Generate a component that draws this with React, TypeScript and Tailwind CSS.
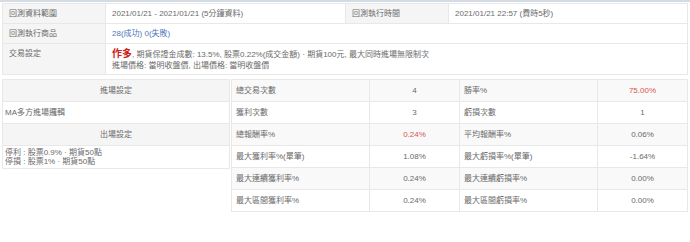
import React from 'react';

const font = { fontFamily: '"Liberation Sans", "Noto Sans CJK TC", sans-serif' };

const stats: [string, string, boolean, string, string, boolean][] = [
  ['總交易次數', '4', false, '勝率%', '75.00%', true],
  ['獲利次數', '3', false, '虧損次數', '1', false],
  ['總報酬率%', '0.24%', true, '平均報酬率%', '0.06%', false],
  ['最大獲利率%(單筆)', '1.08%', false, '最大虧損率%(單筆)', '-1.64%', false],
  ['最大連續獲利率%', '0.24%', false, '最大連續虧損率%', '0.00%', false],
  ['最大區間獲利率%', '0.24%', false, '最大區間虧損率%', '0.00%', false],
];

export default function App() {
  const label = 'bg-[#f5f5f5] border border-[#e8e8e8] px-[6px] align-top text-left font-normal';
  const cell = 'border border-[#e8e8e8] px-[6px] align-top text-left';

  return (
    <div className="w-[690px] h-[242px] bg-white text-[8px] leading-[10px] text-[#6a6a6a] overflow-hidden" style={font}>
      <div className="h-[2px] bg-[#d5dbe3]" />
      <div className="px-[2px] pt-[1px]">
        <table className="w-full border-collapse table-fixed">
          <colgroup>
            <col className="w-[103px]" />
            <col className="w-[240px]" />
            <col className="w-[103px]" />
            <col />
          </colgroup>
          <tbody>
            <tr className="h-[20px]">
              <th className={`${label} pt-[5px]`}>回測資料範圍</th>
              <td className={`${cell} pt-[5px]`}>2021/01/21 - 2021/01/21 (5分鐘資料)</td>
              <th className={`${label} pt-[5px]`}>回測執行時間</th>
              <td className={`${cell} pt-[5px]`}>2021/01/21 22:57 (費時5秒)</td>
            </tr>
            <tr className="h-[20px]">
              <th className={`${label} pt-[5px]`}>回測執行商品</th>
              <td className={`${cell} pt-[5px] text-[#4a78b8]`} colSpan={3}>28(成功) 0(失敗)</td>
            </tr>
            <tr className="h-[31px]">
              <th className={`${label} pt-[5px]`}>交易設定</th>
              <td className={`${cell} pt-[4px] pb-[3px]`} colSpan={3}>
                <div className="leading-[12px]">
                  <span className="text-[10px] font-bold text-[#d0201a]">作多</span>
                  , 期貨保證金成數: 13.5%, 股票0.22%(成交金額) · 期貨100元, 最大同時進場無限制次
                </div>
                <div>進場價格: 當明收盤價, 出場價格: 當明收盤價</div>
              </td>
            </tr>
          </tbody>
        </table>
      </div>

      <div className="flex items-start gap-[1px] px-[2px] pt-[4px]">
        <table className="w-[228px] border-collapse table-fixed">
          <tbody>
            <tr className="h-[22px]">
              <th className="bg-[#f5f5f5] border border-[#e8e8e8] font-normal text-center">進場設定</th>
            </tr>
            <tr className="h-[22px]">
              <td className="border border-[#e8e8e8] px-[2px]">MA多方進場邏輯</td>
            </tr>
            <tr className="h-[22px]">
              <th className="bg-[#f5f5f5] border border-[#e8e8e8] font-normal text-center">出場設定</th>
            </tr>
            <tr className="h-[23px]">
              <td className="border border-[#e8e8e8] px-[2px] pt-[1px] pb-[2px] leading-[9px]">
                <div>停利 : 股票0.9% · 期貨50點</div>
                <div>停損 : 股票1% · 期貨50點</div>
              </td>
            </tr>
          </tbody>
        </table>

        <table className="flex-1 border-collapse table-fixed">
          <colgroup>
            <col className="w-[138px]" />
            <col className="w-[90px]" />
            <col className="w-[138px]" />
            <col />
          </colgroup>
          <tbody>
            {stats.map(([l1, v1, r1, l2, v2, r2], i) => (
              <tr key={l1} className={`h-[22px] ${i % 2 === 0 ? 'bg-[#f9f9f9]' : 'bg-white'}`}>
                <td className="border border-[#e8e8e8] px-[4px]">{l1}</td>
                <td className={`border border-[#e8e8e8] text-center ${r1 ? 'text-[#d9534f]' : ''}`}>{v1}</td>
                <td className="border border-[#e8e8e8] px-[4px]">{l2}</td>
                <td className={`border border-[#e8e8e8] text-center ${r2 ? 'text-[#d9534f]' : ''}`}>{v2}</td>
              </tr>
            ))}
          </tbody>
        </table>
      </div>
    </div>
  );
}
